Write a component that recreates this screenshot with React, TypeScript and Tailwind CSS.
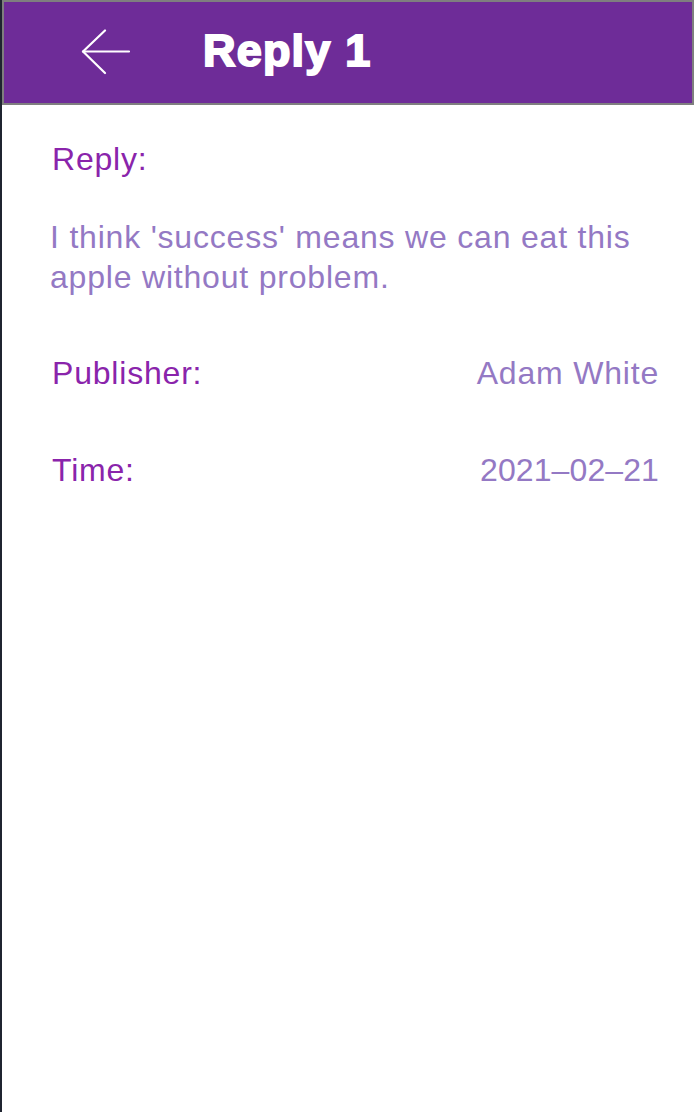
import React from 'react'

interface RowProps {
  label: string
  value: string
  tight?: boolean
}

// Label on the left, value pushed to the right
const InfoRow: React.FC<RowProps> = ({ label, value, tight }) => (
  <div className="flex flex-row items-center justify-between w-full leading-[40px]">
    <span className="text-[#8a24ab]">{label}</span>
    <span className={tight ? 'text-[#9479c4] tracking-[0.1px]' : 'text-[#9479c4]'}>{value}</span>
  </div>
)

const App: React.FC = () => {
  return (
    <div
      className="flex flex-col w-full min-h-[1112px] bg-white border-l-2 border-[#1f2430]"
      style={{ fontFamily: '"Liberation Sans", Arial, sans-serif' }}
    >
      {/* Header */}
      <div className="flex flex-row items-center h-[105px] bg-[#6e2c98] border-2 border-[#7f7f7f]">
        <button type="button" className="flex items-center ml-[76px] text-white">
          <svg width="52" height="48" viewBox="0 0 52 48" fill="none" stroke="white" strokeWidth="2.2" strokeLinecap="round" strokeLinejoin="round">
            <path d="M49 22.5H3" />
            <path d="M25 1.5L3 22.5L25 44" />
          </svg>
        </button>
        <h1 className="ml-[71px] pb-[4px] text-[45px] font-bold text-white tracking-[1.2px] [-webkit-text-stroke:2px_white]">
          Reply 1
        </h1>
      </div>

      {/* Body */}
      <div className="flex flex-col pt-[34px] pl-[48px] pr-[35px] text-[32px] tracking-[0.8px]">
        <div className="leading-[40px] text-[#8a24ab] pl-[2px]">Reply:</div>
        <p className="mt-[38px] leading-[40px] text-[#9479c4]">
          I think 'success' means we can eat this apple without problem.
        </p>
        <div className="mt-[56px] pl-[2px]">
          <InfoRow label="Publisher:" value="Adam White" />
        </div>
        <div className="mt-[57px] pl-[2px]">
          <InfoRow label="Time:" value="2021–02–21" tight />
        </div>
      </div>
    </div>
  )
}

export default App
